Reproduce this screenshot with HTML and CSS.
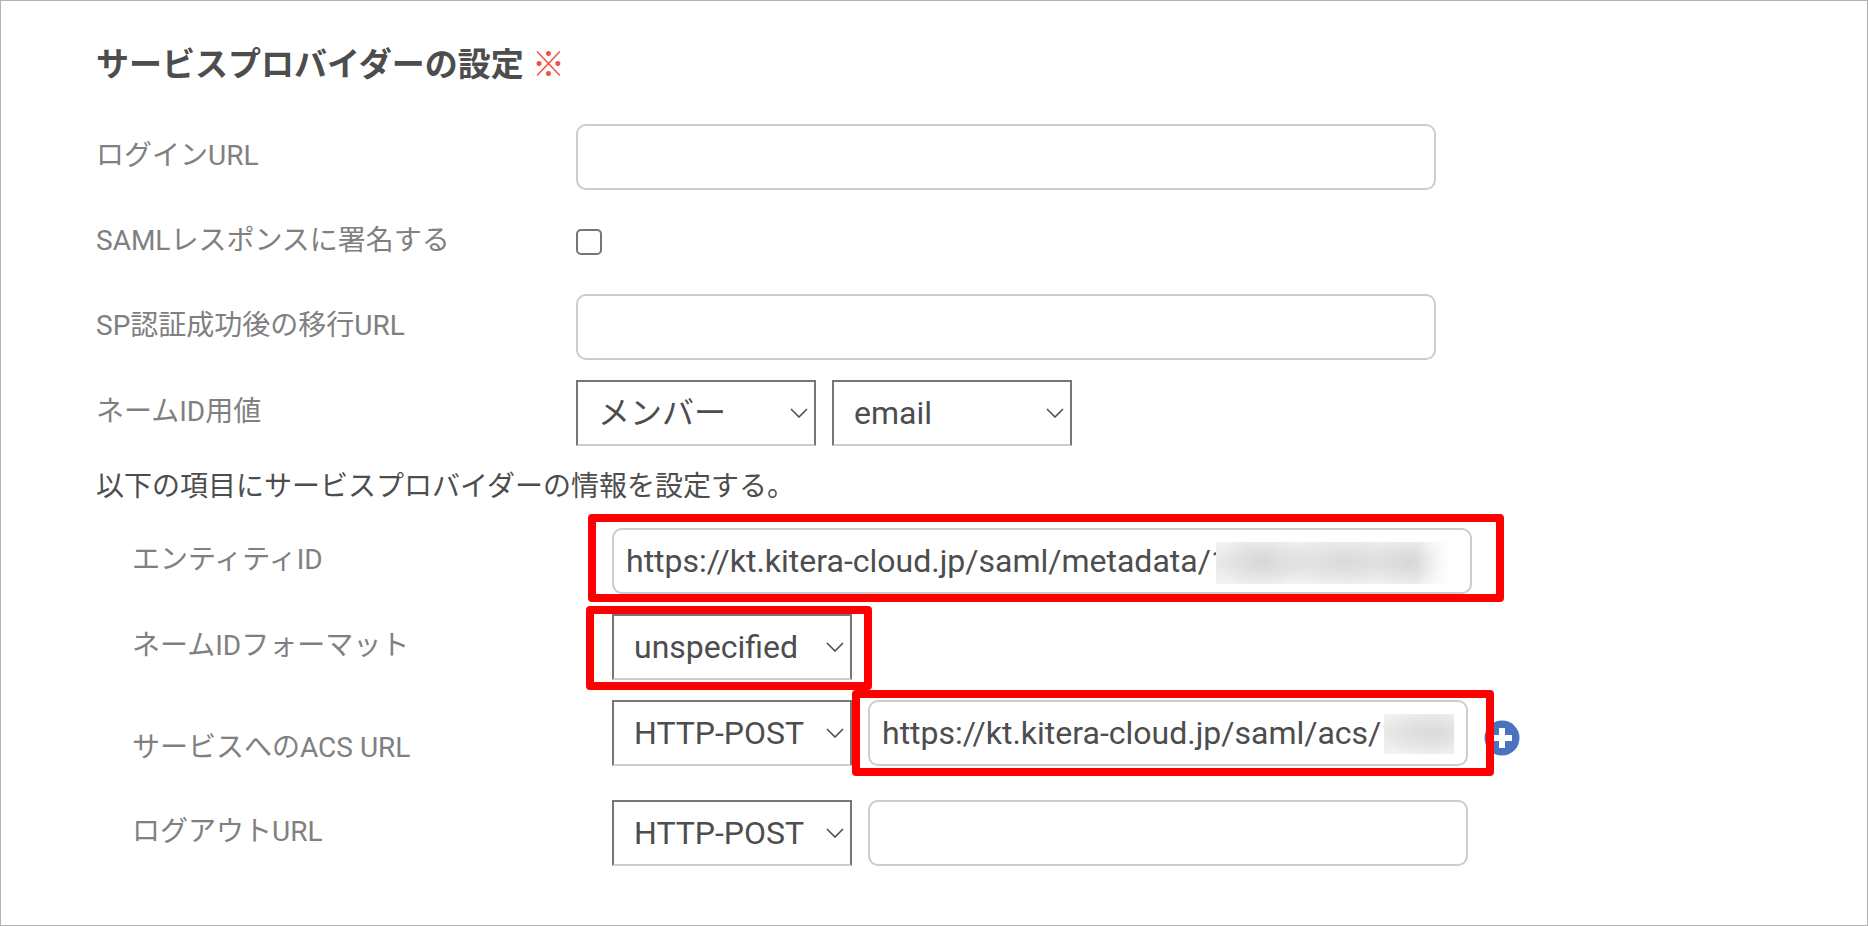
FILE: index.html
```html
<!DOCTYPE html>
<html lang="ja">
<head>
<meta charset="utf-8">
<title>サービスプロバイダーの設定</title>
<link rel="stylesheet" href="styles.css">
</head>
<body>
<main class="panel">
  <h1 class="title">サービスプロバイダーの設定 <span class="required">※</span></h1>
  <form class="form">
    <div class="row">
      <label class="label" for="login-url">ログインURL</label>
      <input class="input" id="login-url" type="text">
    </div>
    <div class="row row-check">
      <label class="label" for="sign">SAMLレスポンスに署名する</label>
      <input class="check" id="sign" type="checkbox">
    </div>
    <div class="row">
      <label class="label" for="redirect-url">SP認証成功後の移行URL</label>
      <input class="input" id="redirect-url" type="text">
    </div>
    <div class="row">
      <label class="label" for="name-source">ネームID用値</label>
      <div class="controls">
        <select class="select" id="name-source"><option>メンバー</option></select>
        <select class="select" aria-label="ネームID用値の項目"><option>email</option></select>
      </div>
    </div>
    <p class="note">以下の項目にサービスプロバイダーの情報を設定する。</p>
    <div class="row row-sub">
      <label class="label" for="entity-id">エンティティID</label>
      <div class="field field-wide">
        <input class="input" id="entity-id" type="text" value="https://kt.kitera-cloud.jp/saml/metadata/1">
        <span class="mask mask-entity"></span>
        <span class="mark mark-entity"></span>
      </div>
    </div>
    <div class="row row-sub">
      <label class="label" for="name-format">ネームIDフォーマット</label>
      <div class="field">
        <select class="select" id="name-format"><option>unspecified</option></select>
        <span class="mark mark-format"></span>
      </div>
    </div>
    <div class="row row-sub row-acs">
      <label class="label" for="acs-url">サービスへのACS URL</label>
      <div class="controls">
        <select class="select" aria-label="ACSバインディング"><option>HTTP-POST</option></select>
        <div class="field field-medium">
          <input class="input" id="acs-url" type="text" value="https://kt.kitera-cloud.jp/saml/acs/1">
          <span class="mask mask-acs"></span>
          <span class="mark mark-acs"></span>
        </div>
        <button class="add" type="button" aria-label="追加">
          <svg class="add-icon" viewBox="0 0 36 36" aria-hidden="true"><circle cx="18" cy="18" r="17.5" fill="#4a72c0"/><path d="M18 8v20M8 18h20" stroke="#fff" stroke-width="6"/></svg>
        </button>
      </div>
    </div>
    <div class="row row-sub">
      <label class="label" for="logout-url">ログアウトURL</label>
      <div class="controls">
        <select class="select" aria-label="ログアウトバインディング"><option>HTTP-POST</option></select>
        <div class="field field-medium">
          <input class="input" id="logout-url" type="text">
        </div>
      </div>
    </div>
  </form>
</main>
</body>
</html>
```

FILE: styles.css
```css
* {
  box-sizing: border-box;
}

body {
  margin: 0;
  background: #fff;
  color: #4d4d4d;
  font-family: Roboto, "Noto Sans CJK JP", sans-serif;
  font-size: 28px;
}

.panel {
  min-height: 100vh;
  padding: 40px 95px;
  border: 1px solid #b3b3b3;
}

.title {
  margin: 0 0 35px;
  font-size: 33px;
  font-weight: 700;
  line-height: 48px;
}

.required {
  color: #f0523f;
  font-weight: 400;
}

.form {
  display: flex;
  flex-direction: column;
  gap: 20px;
}

.row {
  display: flex;
  align-items: center;
  min-height: 66px;
}

.row-check {
  min-height: 64px;
}

.row-sub {
  padding-left: 36px;
}

.row-acs {
  align-items: flex-start;
  min-height: 80px;
}

.label {
  flex: 0 0 480px;
  padding-bottom: 2px;
  color: #808080;
  line-height: 40px;
}

.row-acs .label {
  padding-top: 28px;
}

.note {
  margin: 0;
  line-height: 42px;
}

.controls {
  display: flex;
  flex: 1 1 0;
  gap: 16px;
  min-width: 0;
}

.input {
  flex: 0 1 860px;
  width: 100%;
  min-width: 0;
  height: 66px;
  padding: 0 12px;
  border: 2px solid #ccc;
  border-radius: 10px;
  background: #fff;
  color: #4d4d4d;
  font: inherit;
  font-size: 32px;
}

.select {
  flex: 0 0 auto;
  width: 240px;
  height: 66px;
  padding: 0 36px 0 20px;
  border: 2px solid #767676;
  border-bottom-color: #ccc;
  border-radius: 0;
  appearance: none;
  background: #fff url("data:image/svg+xml,%3Csvg xmlns='http://www.w3.org/2000/svg' width='18' height='10' viewBox='0 0 18 10'%3E%3Cpath d='M1 1l8 8 8-8' fill='none' stroke='%234d4d4d' stroke-width='1.6'/%3E%3C/svg%3E") no-repeat right 6px center;
  color: #4d4d4d;
  font: inherit;
  font-size: 32px;
}

.check {
  width: 26px;
  height: 26px;
  margin: 0;
  border: 2px solid #767676;
  border-radius: 5px;
  appearance: none;
  background: #fff;
}

.check:checked {
  background: #4a72c0;
}

.field {
  position: relative;
  display: flex;
}

.field-wide {
  flex: 0 1 860px;
}

.field-medium {
  flex: 0 1 600px;
}

.add {
  align-self: flex-start;
  width: 36px;
  height: 36px;
  margin-top: 20px;
  padding: 0;
  border: 0;
  background: none;
}

.add-icon {
  display: block;
  width: 36px;
  height: 36px;
}

/* Highlight frames and masks lie over the fields */
.mark {
  position: absolute;
  border: 8px solid #f00;
  border-radius: 4px;
  pointer-events: none;
}

.mark-entity {
  inset: -14px -32px -8px -24px;
}

.mark-format {
  inset: -8px -20px -10px -26px;
}

.mark-acs {
  inset: -10px -26px -10px -16px;
}

.mask {
  position: absolute;
  background-color: #fff;
}

.mask-entity {
  top: 14px;
  right: 22px;
  width: 234px;
  height: 42px;
  background-image:
    linear-gradient(to right, transparent 86%, #fff),
    radial-gradient(ellipse 46px 30px at 46px 19px, rgba(208, 208, 208, 0.7), transparent),
    radial-gradient(ellipse 70px 30px at 130px 19px, rgba(208, 208, 208, 0.6), transparent),
    radial-gradient(ellipse 36px 30px at 194px 20px, rgba(208, 208, 208, 0.7), transparent),
    linear-gradient(to bottom, #f2f2f2, #e8e8e8 50%, #f3f3f3);
}

.mask-acs {
  top: 14px;
  right: 14px;
  width: 70px;
  height: 40px;
  background-image:
    radial-gradient(ellipse 48px 28px at 46px 18px, rgba(208, 208, 208, 0.6), transparent),
    linear-gradient(to bottom, #f2f2f2, #e8e8e8 50%, #f3f3f3);
}
```
